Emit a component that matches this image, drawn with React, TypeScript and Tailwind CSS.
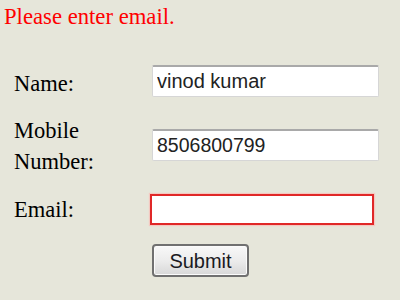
import React from "react";

export default function App() {
  const serif = "font-['Liberation_Serif','Times_New_Roman',serif]";
  const sans = "font-['Liberation_Sans',Arial,sans-serif]";
  return (
    <div className={`w-[400px] h-[300px] bg-[#e6e6da] overflow-hidden ${serif}`}>
      <p className="pt-[4px] pl-[4px] text-[22.7px] leading-[26px] text-[#ff0000]">
        Please enter email.
      </p>
      <div className="mt-[19px] pl-[14px] flex flex-col">
        <div className="h-[64px] flex items-center">
          <label className="w-[138px] text-[22.5px] leading-[31px] text-black pt-[4px]">Name:</label>
          <input
            readOnly
            value="vinod kumar"
            className={`w-[227px] h-[32px] bg-white border border-[#d6d6d6] border-t-2 border-t-[#a9a9a9] rounded-[2px] pl-[4px] text-[20px] text-[#222] outline-none ${sans}`}
          />
        </div>
        <div className="h-[64px] flex items-center">
          <label className="w-[138px] text-[22.5px] leading-[31px] text-black pt-[2px]">
            Mobile
            <br />
            Number:
          </label>
          <input
            readOnly
            value="8506800799"
            className={`w-[227px] h-[32px] bg-white border border-[#d6d6d6] border-t-2 border-t-[#a9a9a9] rounded-[2px] pl-[4px] text-[19.5px] text-[#222] outline-none ${sans}`}
          />
        </div>
        <div className="h-[64px] flex items-center">
          <label className="w-[136px] text-[22.5px] leading-[31px] text-black">Email:</label>
          <input
            readOnly
            value=""
            className={`w-[224px] h-[31px] bg-white border-2 border-[#e02828] shadow-[0_0_1px_1px_#f4c8c0] pl-[4px] text-[19.5px] text-[#222] outline-none ${sans}`}
          />
        </div>
        <div className="mt-[3px] pl-[138px]">
          <button
            className={`w-[97px] h-[33px] rounded-[4px] border-2 border-[#707070] bg-gradient-to-b from-[#f8f8f8] via-[#ececec] to-[#d8d8d8] shadow-[inset_0_0_0_1px_#fbfbfb] text-[20px] leading-none text-[#1a1a22] ${sans}`}
          >
            Submit
          </button>
        </div>
      </div>
    </div>
  );
}
